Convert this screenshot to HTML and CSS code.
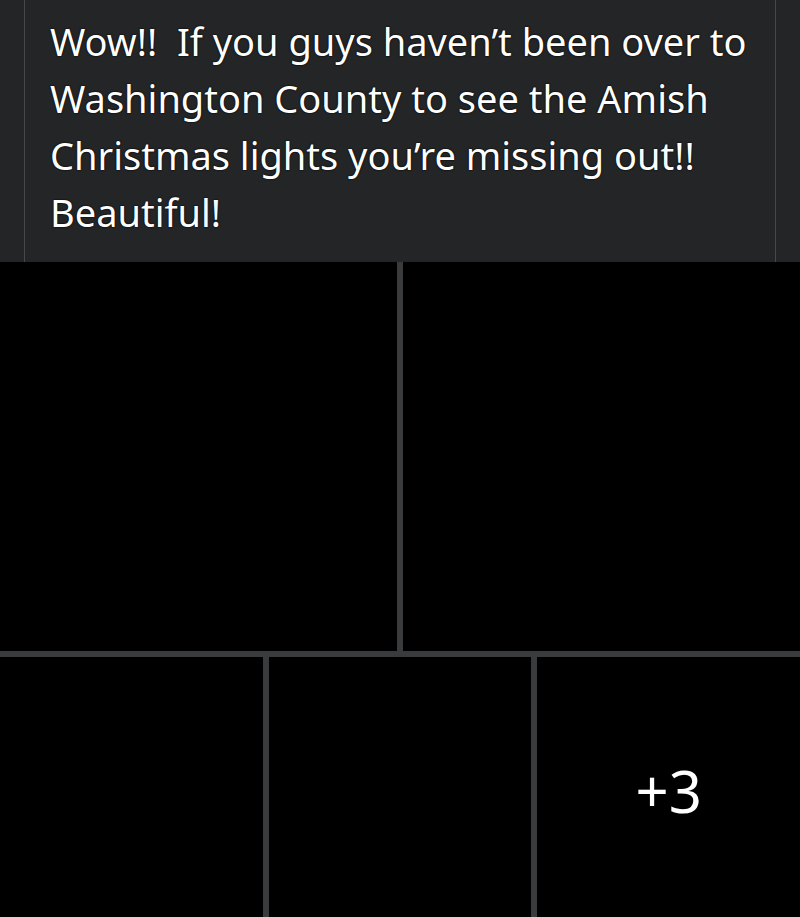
FILE: index.html
```html
<!DOCTYPE html>
<html lang="en">
<head>
    <meta charset="UTF-8">
    <meta name="viewport" content="width=device-width, initial-scale=1.0">
    <title>Post</title>
    <link rel="stylesheet" href="styles.css">
</head>
<body>

    <!-- Текст поста -->
    <div class="post-head">
        <div class="post-body">
            <p class="post-text">Wow!!&nbsp; If you guys haven’t been over to Washington County to see the Amish Christmas lights you’re missing out!! Beautiful!</p>
        </div>
    </div>

    <!-- Сетка фото -->
    <div class="photos">
        <div class="row row-top">
            <div class="tile"></div>
            <div class="tile"></div>
        </div>
        <div class="row row-bottom">
            <div class="tile"></div>
            <div class="tile"></div>
            <div class="tile more">+3</div>
        </div>
    </div>

</body>
</html>
```
FILE: styles.css
```css
body {
    margin: 0;
    padding: 0;
    background: #000;
    font-family: 'Noto Sans', sans-serif;
    height: 917px;
    overflow: hidden;
}

.post-head {
    background: #242526;
    height: 262px;
    padding: 0 24px;
    box-sizing: border-box;
}

.post-body {
    height: 100%;
    border-left: 1px solid #46484a;
    border-right: 1px solid #46484a;
    padding: 13px 20px 0 25px;
    box-sizing: border-box;
}

.post-text {
    margin: 0;
    color: #fff;
    font-size: 38px;
    line-height: 57px;
    text-shadow: 0 0 2px #000, 0 0 1px #000;
}

.photos {
    display: flex;
    flex-direction: column;
    gap: 6px;
    background: #3a3b3c;
}

.row {
    display: flex;
    gap: 6px;
}

.row-top {
    height: 389px;
}

.row-bottom {
    height: 266px;
}

.tile {
    flex: 1;
    background: #000;
}

.more {
    display: flex;
    align-items: center;
    justify-content: center;
    color: #fff;
    font-size: 58px;
}
```
